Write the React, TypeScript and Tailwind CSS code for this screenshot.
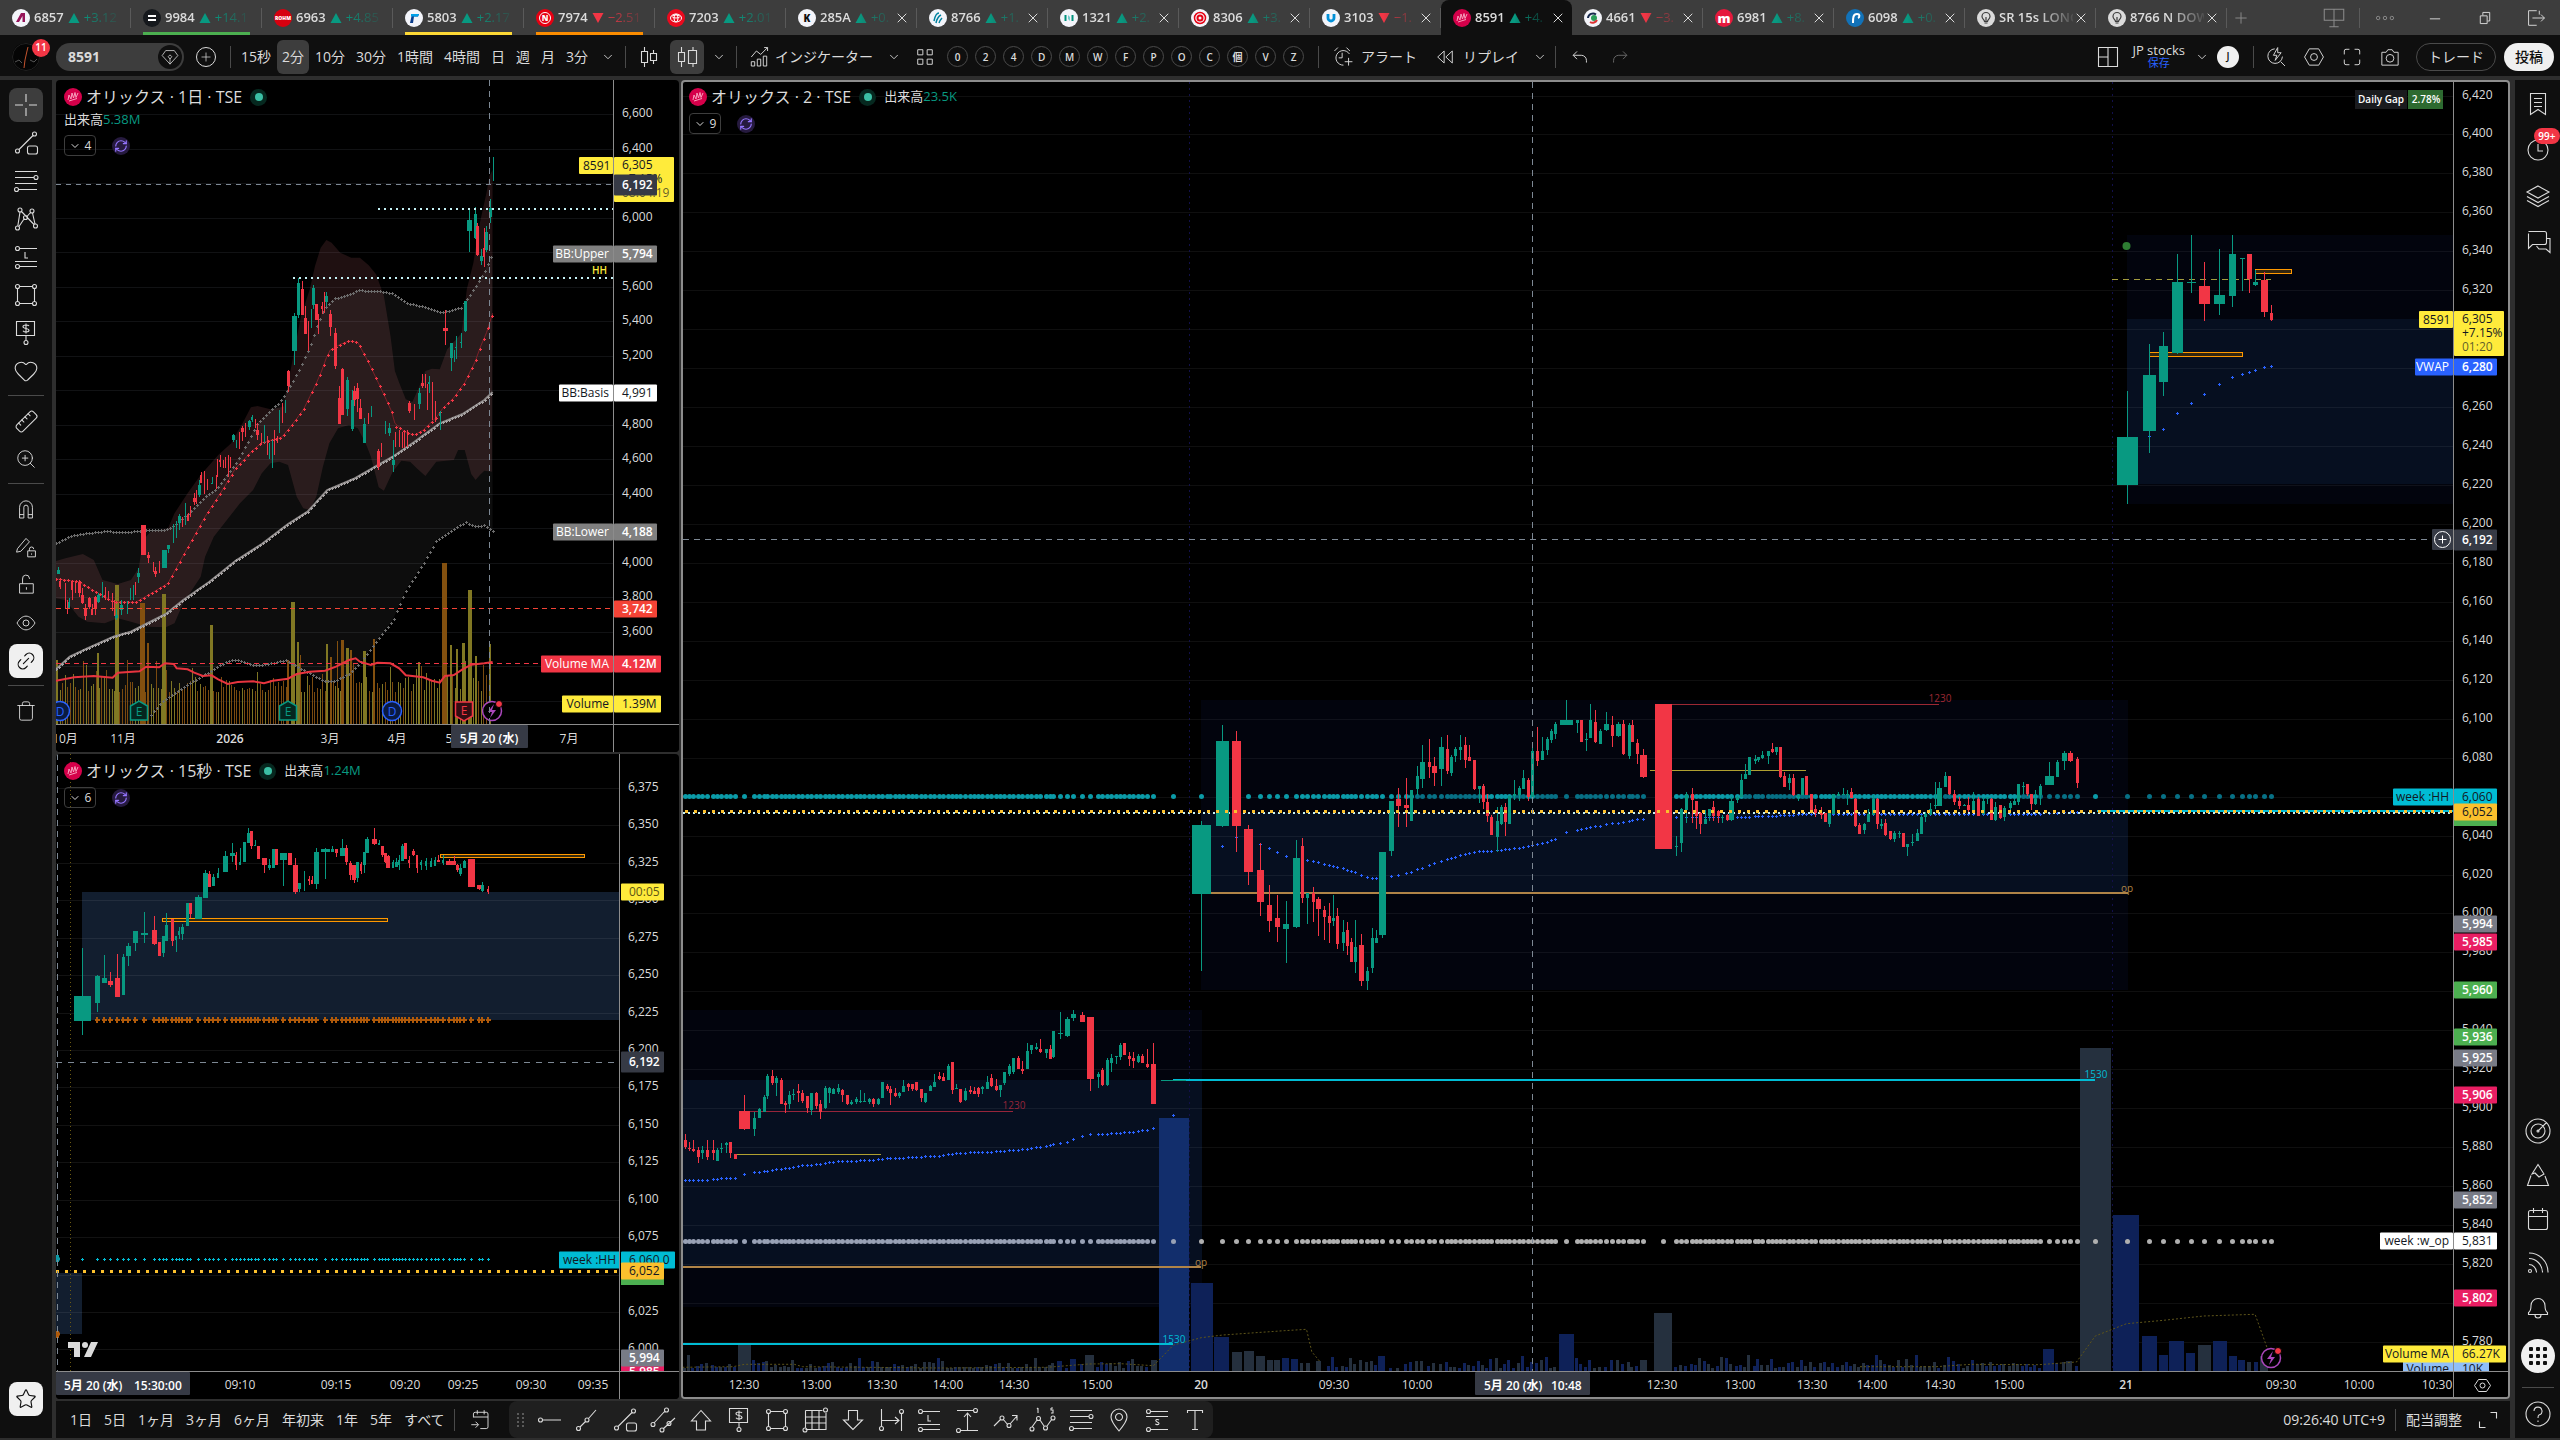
import type { ReactNode } from 'react';
import { ChevronDown, Heart, Link2, Plus, RefreshCw, Ruler, Star, Trash, X, ZoomIn } from 'lucide-react';

const UP = '#089981';
const DOWN = '#f23645';

type Point = [number, number];

/** A run of bars recorded on its own origin and scale. */
interface Segment {
  ox: number;
  oy: number;
  sx: number;
  sy: number;
  bars: string;
}

interface Candle {
  x: number;
  w: number;
  hi: number;
  top: number;
  bottom: number;
  lo: number;
  up: boolean;
}

interface Tag {
  y: number;
  text: string;
  fill: string;
  color?: string;
  h?: number;
  w?: number;
  name?: string;
  nameW?: number;
}

// Every bar: x, body width (minus = falling, 1 = default), high, body top, body bottom, low
function readCandles({ ox, oy, sx, sy, bars }: Segment): Candle[] {
  return bars
    .trim()
    .split(/\s*,\s*/)
    .map((bar) => {
      const [x, w, hi, top, bottom, lo] = bar.split(' ').map(Number);
      const width = Math.abs(w) === 1 ? 3 : Math.max(1, Math.round(Math.abs(w) / sx));
      return {
        x: Math.round(ox + x / sx),
        w: width,
        hi: Math.round(oy + hi / sy),
        top: Math.round(oy + top / sy),
        bottom: Math.round(oy + bottom / sy),
        lo: Math.round(oy + lo / sy),
        up: w > 0
      };
    });
}

function place(points: Point[], ox: number, oy: number, sx: number, sy = 3): Point[] {
  return points.map(([x, y]) => [ox + x / sx, oy + y / sy]);
}

function toPath(points: Point[]): string {
  return points.map(([x, y], i) => `${i ? 'L' : 'M'}${x.toFixed(1)} ${y.toFixed(1)}`).join('');
}

function valueAt(points: Point[], x: number): number | null {
  for (let i = 1; i < points.length; i++) {
    const [x0, y0] = points[i - 1];
    const [x1, y1] = points[i];
    if (x >= x0 - 1 && x <= x1 + 1) return y0 + ((y1 - y0) * (x - x0)) / (x1 - x0);
  }
  return null;
}

function noise(n: number): number {
  const v = Math.sin(n * 12.9898) * 43758.5453;
  return v - Math.floor(v);
}

const MAIN_19: Segment = {
  ox: 680, oy: 960, sx: 2.45, sy: 3,
  bars: `13 -1 522 540 560 568,23 -1 547 563 566 572,33 -1 540 566 572 575,45 -1 562 570 590 608,55 1 558 570 580 598,67 -1 541 570 592 600,80 -1 540 570 578 600,91 1 565 570 602 602,101 1 550 563 566 580,112 1 545 550 556 580,123 -1 546 546 580 593,134 -1 582 582 597 597,158 -26 405 453 507 509,182 1 457 475 507 528,193 1 445 447 474 474,205 1 405 411 455 455,214 1 342 348 408 418,226 -1 330 348 368 375,236 1 348 354 370 408,247 -1 354 360 432 433,258 -1 423 430 436 459,268 1 393 405 432 446,278 1 388 402 405 420,290 -1 372 393 400 426,300 -1 390 400 424 430,312 -1 408 409 444 459,322 1 400 400 450 466,332 -1 396 400 438 446,344 -1 420 432 456 477,355 1 378 384 445 447,365 1 382 384 400 428,376 1 384 387 402 402,386 1 372 384 396 402,397 -1 388 390 405 425,408 -1 405 405 432 434,420 1 420 426 432 434,430 1 411 417 427 433,440 1 390 423 427 430,452 1 398 423 427 427,462 1 413 417 427 432,474 -1 414 417 432 440,484 1 414 417 432 434,494 1 366 366 414 414,506 -1 371 377 387 394,515 -1 378 387 400 435,526 -1 384 400 408 410,537 1 395 400 408 414,547 1 360 378 396 396,558 -1 370 372 380 392,569 -1 372 372 388 392,579 -1 366 366 390 392,591 -1 388 388 414 426,600 1 400 400 426 429,613 1 376 378 392 392,623 1 342 365 381 381,634 -1 336 348 358 360,645 -1 340 350 362 362,656 1 312 318 360 360,667 -1 306 306 389 402,677 1 372 384 388 388,687 -1 386 386 425 428,699 1 385 393 420 423,710 -1 378 390 396 402,721 -1 380 393 402 402,731 -1 382 384 402 411,741 1 378 381 388 402,752 1 348 366 388 388,763 -1 343 355 378 380,775 -1 356 378 390 392,785 1 376 376 390 411,795 1 336 336 368 375,807 1 312 318 342 348,817 1 294 294 336 342,829 -1 288 294 327 328,839 -1 303 327 332 342,851 1 249 272 327 327,861 1 254 254 270 282,873 1 249 261 267 270,883 -1 237 267 276 280,896 1 267 267 278 294,906 -1 255 267 296 297,915 1 213 213 290 294,930 12 156 219 222 237,947 12 171 177 228 231,964 12 150 162 174 182,984 -12 156 165 185 186,1005 -18 171 171 357 392,1023 1 336 342 350 384,1035 -1 323 330 375 377,1045 1 294 300 375 377,1055 1 282 293 308 335,1067 1 288 288 291 312,1077 1 249 255 290 300,1089 -1 249 249 286 286,1099 -1 276 288 296 318,1109 -1 276 293 303 324,1121 1 282 288 306 308,1132 -1 282 288 308 309,1145 -1 267 312 320 324,1160 -12 249 312 432 432`
};

const MAIN_20: Segment = {
  ox: 1180, oy: 680, sx: 2.24, sy: 3,
  bars: `48 42 423 435 642 873,95 29 135 183 437 440,126 -21 153 183 437 516,153 -21 435 447 576 615,180 -16 490 570 666 708,200 -11 615 675 723 756,218 -11 645 714 741 786,238 14 663 732 747 849,259 16 480 534 741 744,274 -1 474 498 654 669,285 1 640 640 654 732,297 -1 621 639 666 726,310 -11 651 657 687 768,323 -1 678 690 711 780,333 -1 669 708 729 789,343 1 645 714 723 738,352 -1 684 708 792 807,364 1 720 756 789 813,373 -1 726 750 798 825,382 -1 774 786 846 846,393 1 720 801 846 879,406 -11 762 795 903 918,418 1 861 873 903 930,429 1 744 774 864 879,438 1 750 774 789 789,453 15 516 516 765 774,473 11 363 363 513 528,489 -11 324 357 378 441,507 -11 294 375 384 441,518 1 330 330 423 423,530 1 258 288 327 345,543 11 195 246 297 324,557 -1 177 246 261 294,570 -12 231 258 279 318,585 11 171 201 267 318,597 -1 165 207 273 282,606 1 225 231 279 288,617 1 201 207 228 246,628 1 165 201 210 240,639 -1 171 195 240 264,648 -1 195 231 243 243,659 -1 240 240 327 330,669 1 318 318 327 369,678 -1 312 318 366 387,688 -1 342 366 408 426,697 -1 405 411 465 465,709 1 381 423 471 516,718 1 375 381 432 435,727 -1 369 381 426 468,738 1 348 348 432 432,749 1 300 342 348 360,760 1 318 324 345 363,769 1 270 294 327 327,780 -1 294 300 351 363,789 1 201 213 351 351,800 -1 141 213 243 258,810 1 171 213 240 240,821 1 171 177 210 225,830 1 147 153 180 189,841 1 126 132 162 177,865 29 60 120 135 135,890 1 120 120 129 159,899 -1 120 120 186 186,910 1 159 177 180 213,919 1 72 120 174 174,930 -1 90 126 186 189,941 1 147 153 192 192,955 11 96 132 150 153,968 -1 108 135 168 201,982 11 126 132 168 171,993 -1 120 132 222 225,1005 1 129 135 228 237,1013 -1 120 135 186 186,1024 -1 177 189 222 252,1038 -16 207 225 291 294,1081 -38 72 72 507 507,1112 1 468 498 501 528,1123 1 384 387 489 516,1134 1 336 342 390 429,1146 -1 324 342 360 429,1155 -1 363 363 408 447,1164 -1 396 399 432 462,1175 1 390 417 432 432,1184 1 387 387 408 423,1195 -1 363 381 408 423,1204 -1 390 393 408 429,1213 1 405 411 414 429,1225 -1 402 405 420 423,1235 11 351 363 420 423,1247 1 348 351 360 369,1257 1 282 300 351 351,1266 1 252 282 297 297,1275 1 231 231 285 285,1287 1 225 237 243 252,1295 1 231 231 240 246,1304 1 213 225 234 237,1316 1 213 213 228 252,1325 -1 189 207 216 219,1336 1 201 201 216 225,1345 -1 201 201 291 294,1354 -1 276 288 321 321,1365 1 282 294 309 330,1374 -1 282 294 345 348,1385 1 345 345 350 363,1394 1 294 294 345 345,1403 -1 288 288 345 345,1414 -1 342 342 390 390,1423 -1 375 387 399 411,1435 -1 381 399 405 417,1444 -1 399 399 426 426,1453 1 396 399 432 441,1463 1 342 342 402 402,1473 1 336 342 348 348,1484 1 324 342 345 345,1493 1 330 342 345 375,1502 -1 324 336 354 354,1513 -1 354 357 438 441,1522 -1 429 435 462 462`
};

const MAIN_20_LATE: Segment = {
  ox: 1860, oy: 680, sx: 2.24, sy: 3,
  bars: `8 1 430 432 450 462,19 1 387 402 426 426,29 1 345 357 405 405,39 -1 354 357 432 447,48 1 417 432 438 447,57 -1 417 429 465 468,68 -1 453 453 477 480,77 1 453 459 477 486,88 1 453 459 462 474,97 -1 459 459 501 501,106 1 492 492 501 528,117 1 462 486 489 498,127 1 447 459 483 483,137 1 405 411 462 462,146 1 396 402 411 426,156 1 369 387 405 405,167 1 306 375 378 387,178 11 306 324 378 378,191 1 276 288 321 321,200 -1 288 288 342 345,210 -1 330 342 366 375,221 -1 351 363 378 387,233 1 372 375 378 378,243 -1 351 375 390 396,254 1 336 363 393 399,265 -1 351 357 408 408,275 1 351 363 402 405,285 1 351 351 355 372,294 -1 354 357 420 420,303 1 366 381 420 423,314 -1 375 375 414 417,323 1 378 384 411 423,335 1 363 369 384 402,344 1 357 363 375 375,355 1 312 312 366 375,364 1 306 318 321 342,373 -1 312 312 342 348,384 -1 342 342 372 390,393 1 330 357 372 375,404 1 312 318 345 375,424 21 246 288 315 315,442 1 240 246 291 291,456 11 213 219 243 270,471 -11 213 219 243 246,485 -1 231 237 309 324`
};

const MAIN_21: Segment = {
  ox: 2060, oy: 200, sx: 3, sy: 3,
  bars: `202 63 573 711 855 912,268 39 432 525 693 759,310 27 396 438 546 588,352 33 162 246 459 462,394 27 105 246 249 279,433 -33 186 258 312 363,478 33 147 285 312 345,517 21 105 162 288 321,547 15 174 174 177 273,568 -15 162 162 237 279,586 15 210 246 255 258,613 -21 216 240 336 351,634 -9 315 339 360 363`
};

const DAILY_HIGH: Segment = {
  ox: 0, oy: 76, sx: 2.292, sy: 3,
  bars: `661 -7 882 884 930 948,673 12 711 720 825 867,684 7 606 621 717 726,693 -8 615 639 717 717,700 -8 690 726 774 774,707 -2 735 774 800 825,712 2 699 720 740 756,718 7 627 636 687 699,725 -7 684 684 732 732,730 -2 715 716 740 774,737 -5 678 690 699 714,742 -2 648 680 690 711,748 7 648 660 678 690,757 -7 702 714 753 780,767 -7 756 770 870 879,776 -7 930 966 1044 1044,785 -7 877 879 1016 1016,796 7 903 912 998 1020,806 7 942 972 1060 1065,812 -7 930 945 972 990,819 -7 921 936 970 1008,826 -7 970 996 1028 1028,851 2 990 1000 1020 1024,938 -8 975 981 1004 1012,950 -2 985 990 1020 1032,961 7 936 951 984 999,968 -7 894 921 930 936,973 -2 894 900 930 936,978 -2 925 930 960 1002,984 5 900 918 925 952,990 -2 918 930 1000 1032,997 -2 975 990 1020 1037,1008 5 1005 1010 1020 1062,1019 -12 702 756 765 807,1033 7 801 801 846 885,1040 2 822 830 850 858,1046 5 780 813 817 850,1056 4 771 798 801 816,1065 7 675 675 765 768,1076 12 396 432 465 528,1088 8 393 414 486 489,1094 -8 441 450 537 540,1102 7 519 540 555 567,1109 -5 456 516 543 573,1115 7 450 468 522 528,1122 7 369 396 423 440,1129 2 243 250 300 315`
};

const DAILY_LOW: Segment = {
  ox: 0, oy: 400, sx: 2.292, sy: 3,
  bars: `132 6 501 510 522 522,138 -5 536 542 560 568,148 -2 550 570 610 628,153 -2 600 610 630 642,158 5 595 605 628 628,165 -5 541 545 570 600,173 -2 545 550 570 580,180 -7 540 545 580 590,187 -7 565 585 608 612,194 -7 612 628 648 660,205 -7 592 595 620 628,212 -5 612 628 645 645,218 -7 588 591 625 645,225 7 580 585 605 610,233 2 546 555 585 595,240 -5 560 585 590 600,248 -2 572 580 590 600,256 -2 580 600 620 632,262 -2 600 610 630 648,267 7 628 645 655 660,278 7 600 615 630 645,290 2 603 610 630 642,297 2 565 575 590 600,304 2 556 560 590 600,310 -2 545 550 570 585,317 7 504 520 532 548,328 -12 375 375 465 465,340 -7 455 465 475 490,350 -2 485 490 510 516,356 -7 500 514 522 530,365 -2 484 490 510 518,375 12 450 450 504 504,386 7 434 434 447 460,397 2 372 378 410 428,403 2 362 378 400 413,411 7 342 348 368 390,418 -2 352 360 370 380,423 2 308 320 360 375,430 -5 340 345 362 362,436 -2 318 320 340 350,444 -7 280 295 305 315,450 -2 270 280 300 312,456 7 240 255 285 292,460 -5 216 225 250 250,467 -2 213 220 260 282,475 -2 237 240 260 270,485 5 232 248 251 252,494 -2 225 230 250 268,498 -2 177 180 220 232,504 -5 165 180 185 200,510 -2 180 185 200 205,516 -2 172 175 200 205,523 -2 165 170 210 230,528 -2 172 175 200 205,535 7 102 104 120 125,540 2 120 125 140 145,547 -2 97 100 140 148,555 -7 78 84 95 123,562 -2 70 80 100 110,570 7 60 64 80 90,577 5 45 50 60 65,585 -2 57 60 80 84,590 -7 70 90 105 120,598 -2 100 105 130 133,604 2 75 80 120 130,612 -2 108 120 150 165,617 2 130 140 170 178,623 2 120 140 190 203,629 -2 90 100 150 165,634 -2 108 110 120 130,640 2 30 40 90 100,646 -2 10 20 50 68,653 2 0 10 30 40,835 7 55 72 128 130,843 -2 40 45 60 72,851 2 20 25 45 52,867 -7 147 153 202 210,874 -2 130 135 160 170,882 2 63 70 90 102,892 7 70 84 100 108,901 8 120 180 195 215,906 -2 96 100 130 142,915 -2 90 100 130 140,921 -2 95 100 130 145,927 -2 100 110 130 145,933 -2 90 95 130 140`
};

const SECONDS: Segment = {
  ox: 0, oy: 740, sx: 2.292, sy: 3,
  bars: `189 39 624 768 843 885,223 11 705 709 789 816,239 11 645 714 729 729,253 -11 696 723 735 741,269 -11 642 714 771 771,283 7 642 651 765 765,294 11 609 618 648 678,310 11 573 573 609 633,329 15 516 579 585 609,352 -12 528 570 612 615,365 -7 606 606 648 648,373 7 588 588 640 651,380 7 519 555 603 603,395 -7 537 537 603 618,404 5 588 588 600 636,411 5 561 573 585 597,418 7 552 561 582 600,428 7 489 489 558 558,436 -7 489 489 521 534,453 15 465 471 537 537,471 12 390 399 474 474,480 -7 393 402 441 441,489 7 402 411 438 438,500 5 384 399 414 414,515 11 333 348 396 396,531 11 309 339 348 366,542 -5 336 345 375 390,551 5 324 366 375 375,559 7 306 306 366 366,568 7 264 279 309 309,576 -7 273 273 318 327,584 5 300 315 318 318,592 -7 318 318 357 357,606 -11 354 354 375 400,617 7 357 375 384 390,625 8 327 327 384 384,632 -7 327 327 375 375,648 16 339 339 360 438,664 -9 339 339 375 375,675 -11 354 375 456 462,686 7 430 430 447 456,696 3 393 429 432 453,708 -5 408 417 423 435,716 -5 408 420 432 432,725 11 324 336 432 447,745 20 324 327 336 417,761 7 318 327 335 335,771 -7 327 327 339 351,783 11 297 324 348 348,794 -7 315 324 366 375,802 -7 363 369 405 420,812 -9 375 375 420 429,819 7 366 366 414 426,827 -5 366 372 393 402,834 7 336 336 375 400,842 10 291 297 339 339,858 -11 264 297 312 315,868 5 300 309 314 314,876 -7 318 318 344 350,882 -7 339 339 365 368,890 -9 345 348 384 384,900 5 360 366 384 384,908 7 354 366 381 381,914 5 345 360 375 390,922 7 312 318 363 363,929 -7 309 309 357 357,938 -5 348 360 369 384,947 -7 327 333 345 348,955 -5 345 345 385 399,965 5 360 366 375 390,976 5 354 363 378 390,988 5 354 363 380 380,997 5 350 360 378 378,1005 -7 345 360 366 366,1015 5 345 360 369 375,1028 -16 357 363 375 375,1040 -7 348 363 375 375,1048 -7 372 375 390 396,1055 7 372 384 402 408,1064 7 360 363 384 384,1079 -15 357 357 441 441,1097 -10 435 435 446 450,1105 7 426 436 452 455,1118 -5 438 447 455 462`
};

const CLOUD_TOP: Point[] = [[128, 483], [150, 475], [190, 462], [215, 480], [235, 540], [270, 552], [300, 540], [318, 505], [328, 420], [345, 395], [385, 385], [400, 340], [430, 280], [460, 225], [500, 165], [530, 130], [560, 60], [575, 22], [590, 18], [620, 28], [650, 20], [668, -102], [690, -252], [710, -332], [722, -402], [735, -457], [748, -480], [760, -472], [780, -442], [805, -427], [825, -427], [845, -404], [862, -377], [880, -312], [895, -192], [905, -87], [915, -52], [930, -2], [945, 6], [960, -37], [975, -87], [990, -94], [1008, -92], [1025, -152], [1058, -200], [1070, -332], [1085, -412], [1100, -532], [1115, -622], [1122, -672], [1129, -690]];
const CLOUD_BOTTOM: Point[] = [[1128, 215], [1110, 212], [1100, 225], [1090, 240], [1080, 222], [1065, 150], [1050, 150], [1040, 180], [1000, 185], [975, 228], [955, 205], [940, 185], [920, 182], [900, 215], [880, 272], [868, 262], [850, 170], [838, 130], [820, 85], [800, 75], [775, 85], [755, 130], [740, 200], [725, 290], [710, 330], [695, 325], [680, 290], [660, 195], [640, 185], [620, 190], [600, 220], [580, 270], [550, 310], [520, 360], [490, 410], [470, 470], [460, 530], [440, 570], [420, 610], [400, 670], [380, 682], [340, 680], [300, 665], [270, 655], [240, 670], [200, 665], [180, 650], [150, 600], [128, 595]];
const BB_UPPER: Point[] = [[128, 430], [155, 412], [180, 402], [240, 394], [290, 396], [330, 391], [385, 388], [410, 365], [440, 330], [470, 290], [495, 268], [540, 190], [560, 145], [590, 70], [620, 30], [640, 8], [655, -22], [684, -87], [700, -132], [712, -167], [725, -217], [737, -257], [748, -282], [765, -304], [800, -317], [820, -329], [870, -327], [900, -320], [930, -292], [970, -280], [1010, -262], [1030, -268], [1055, -277], [1075, -312], [1100, -362], [1115, -397], [1129, -440]];
const BB_BASIS: Point[] = [[128, 808], [160, 770], [200, 745], [260, 710], [300, 695], [330, 675], [380, 642], [420, 600], [480, 545], [540, 482], [600, 432], [660, 372], [705, 335], [750, 270], [810, 237], [860, 200], [900, 170], [950, 125], [1008, 70], [1060, 42], [1110, 0], [1129, -24]];
const BB_LOWER: Point[] = [[345, 945], [370, 905], [400, 880], [440, 845], [480, 815], [520, 783], [540, 778], [585, 796], [620, 790], [655, 780], [680, 800], [710, 820], [740, 842], [765, 844], [800, 820], [830, 780], [870, 710], [900, 660], [930, 570], [970, 490], [1000, 420], [1030, 395], [1065, 367], [1090, 378], [1110, 376], [1129, 393]];
const FAST_MA: Point[] = [[128, 536], [180, 545], [215, 572], [260, 605], [310, 607], [340, 585], [385, 550], [410, 490], [440, 420], [470, 350], [510, 270], [540, 205], [580, 150], [600, 128], [645, 112], [665, 82], [695, 30], [710, -10], [725, -50], [737, -87], [748, -127], [757, -150], [780, -167], [800, -177], [820, -173], [845, -112], [867, -52], [885, -2], [897, 33], [905, 70], [930, 98], [950, 105], [970, 90], [1000, 52], [1015, 25], [1040, -7], [1065, -52], [1088, -112], [1102, -162], [1115, -202], [1129, -260]];
const VOLUME_MA: Point[] = [[128, 842], [170, 832], [215, 828], [258, 833], [270, 818], [320, 814], [335, 800], [365, 802], [378, 790], [398, 792], [405, 805], [430, 808], [445, 818], [465, 828], [485, 826], [500, 838], [522, 852], [545, 846], [580, 844], [605, 850], [625, 842], [660, 836], [680, 822], [710, 815], [745, 812], [770, 800], [800, 780], [815, 775], [825, 785], [850, 795], [865, 788], [895, 790], [915, 805], [930, 826], [970, 832], [990, 842], [1008, 848], [1020, 828], [1040, 825], [1060, 808], [1080, 794], [1110, 790], [1129, 786]];
// x, width, top, 1 = olive / 0 = brown
const DAILY_VOLUME: [number, number, number, number][] = [
  [131, 4, 780, 1], [192, 3, 783, 0], [225, 5, 760, 1], [268, 9, 555, 1], [326, 11, 610, 0], [340, 5, 730, 0], [376, 10, 582, 1], [485, 7, 675, 1], [661, 5, 780, 0], [671, 9, 605, 1], [683, 5, 727, 1], [690, 3, 765, 0], [749, 5, 732, 1], [758, 4, 770, 0], [773, 3, 722, 0], [785, 7, 720, 0], [795, 6, 745, 1], [804, 4, 750, 0], [834, 6, 752, 1], [857, 5, 716, 0], [960, 5, 787, 1], [1018, 12, 489, 0], [1033, 5, 735, 1], [1047, 5, 748, 1], [1062, 7, 730, 1], [1077, 9, 570, 1], [1090, 4, 767, 1], [1124, 5, 733, 1]
];

const VWAP: Point[] = [
  ...place([[13, 661], [55, 661], [80, 657], [134, 653], [158, 640], [205, 633], [250, 626], [300, 616], [344, 612], [376, 605], [430, 602], [484, 598], [506, 595], [560, 592], [640, 587], [677, 579], [760, 575], [839, 568], [896, 558], [947, 545], [984, 529], [1005, 523], [1060, 520], [1121, 514], [1160, 505], [1209, 466]], 680, 960, 2.45),
  ...place([[95, 490], [126, 472], [153, 480], [180, 493], [200, 505], [218, 517], [238, 529], [259, 533], [285, 541], [310, 547], [333, 556], [364, 565], [393, 577], [406, 586], [429, 595], [438, 595], [473, 589], [507, 580], [530, 568], [570, 550], [597, 538], [628, 526], [669, 514], [709, 511], [749, 505], [789, 496], [821, 485], [841, 478], [865, 455], [890, 451], [919, 442], [955, 433], [993, 425], [1024, 418], [1054, 415], [1112, 412], [1240, 412], [1300, 408], [1354, 406], [1385, 403], [1520, 403]], 1180, 680, 2.24),
  ...place([[0, 403], [200, 403], [400, 401], [485, 395]], 1860, 680, 2.24),
  ...place([[268, 703], [310, 688], [352, 637], [394, 607], [433, 580], [478, 550], [517, 532], [547, 523], [568, 517], [586, 511], [613, 502], [634, 499]], 2060, 200, 3)
];

const MAIN_VOLUME_MA: Point[] = [
  ...place([[6, 1222], [130, 1220], [158, 1213], [280, 1213], [300, 1220], [640, 1224], [900, 1222], [1000, 1212], [1080, 1211], [1160, 1217], [1209, 1155], [1277, 1133], [1330, 1125], [1480, 1112], [1535, 1108], [1548, 1175], [1568, 1205]], 680, 960, 2.45),
  ...place([[0, 860], [170, 860], [250, 853], [400, 854], [485, 846], [527, 768], [597, 731], [680, 721], [770, 708], [885, 703], [915, 815]], 1860, 1080, 2.24)
];

// left edge, width, top, 1 = blue / 0 = slate
const MAIN_VOLUME: [number, number, number, number][] = [
  [738, 13, 1345, 0], [1085, 9, 1355, 0], [1057, 5, 1361, 1], [1070, 6, 1359, 1], [1151, 6, 1360, 0], [1159, 30, 1118, 1], [1191, 22, 1283, 1], [1214, 15, 1337, 1], [1232, 10, 1352, 0], [1244, 10, 1351, 0], [1256, 9, 1356, 0], [1267, 6, 1360, 0], [1274, 6, 1360, 0], [1282, 7, 1358, 1], [1291, 7, 1359, 1], [1300, 3, 1363, 0], [1306, 4, 1363, 0], [1316, 5, 1361, 0], [1378, 7, 1356, 1], [1559, 15, 1334, 1], [1640, 7, 1360, 0], [1654, 18, 1313, 0], [2043, 11, 1349, 1], [2066, 6, 1361, 0], [2080, 31, 1048, 0], [2113, 26, 1215, 1], [2142, 15, 1336, 1], [2159, 9, 1355, 1], [2169, 15, 1341, 1], [2186, 9, 1353, 1], [2198, 13, 1345, 0], [2213, 14, 1341, 1], [2229, 8, 1356, 1], [2238, 7, 1360, 1], [2247, 4, 1362, 0], [2254, 4, 1362, 1], [2260, 8, 1356, 0]
];

function Candles({ data }: { data: Candle[] }) {
  return (
    <g shapeRendering="crispEdges">
      {data.map((c, i) => (
        <g key={i} fill={c.up ? UP : DOWN}>
          <rect x={c.x} y={c.hi} width={1} height={Math.max(1, c.lo - c.hi)} />
          <rect x={c.x - Math.floor(c.w / 2)} y={c.top} width={c.w} height={Math.max(1, c.bottom - c.top)} />
        </g>
      ))}
    </g>
  );
}

function Crosses({ points, color }: { points: Point[]; color: string }) {
  const d = points.map(([x, y]) => `M${Math.round(x) - 1} ${Math.round(y) + 0.5}h3M${Math.round(x) + 0.5} ${Math.round(y) - 1}v3`).join('');
  return <path d={d} stroke={color} fill="none" shapeRendering="crispEdges" />;
}

function HLine({ y, x1, x2, color, dash, w = 1 }: { y: number; x1: number; x2: number; color: string; dash?: string; w?: number }) {
  return <path d={`M${x1} ${w % 2 ? y + 0.5 : y}H${x2}`} stroke={color} strokeWidth={w} strokeDasharray={dash} shapeRendering="crispEdges" />;
}

function VLine({ x, y1, y2, color, dash }: { x: number; y1: number; y2: number; color: string; dash?: string }) {
  return <path d={`M${x + 0.5} ${y1}V${y2}`} stroke={color} strokeDasharray={dash} shapeRendering="crispEdges" />;
}

function PriceTags({ axis, tags }: { axis: number; tags: Tag[] }) {
  return (
    <>
      {tags.map((t) => {
        const h = t.h ?? 17;
        const color = t.color ?? '#ffffff';
        return (
          <g key={t.text + t.y} fontSize={12} fill={color}>
            <rect x={axis + 1} y={t.y - h / 2} width={t.w ?? 43} height={h} rx={1} fill={t.fill} />
            <text x={axis + 9} y={t.y + 4} fontWeight={color === '#ffffff' ? 600 : 400}>{t.text}</text>
            {t.name && (
              <>
                <rect x={axis - t.nameW!} y={t.y - h / 2} width={t.nameW} height={h} rx={1} fill={t.fill} />
                <text x={axis - 4} y={t.y + 4} textAnchor="end">{t.name}</text>
              </>
            )}
          </g>
        );
      })}
    </>
  );
}

interface AxisLabelsProps {
  x: number;
  from: number;
  step: number;
  count: number;
  top: number;
  pitch: number;
  skip?: number[];
}

function AxisLabels({ x, from, step, count, top, pitch, skip = [] }: AxisLabelsProps) {
  return (
    <g fill="#dbdbdb" fontSize={12}>
      {Array.from({ length: count }, (_, i) => from - i * step).map((price, i) =>
        skip.includes(price) ? null : (
          <text key={price} x={x} y={Math.round(top + i * pitch) + 3}>{price.toLocaleString('en-US')}</text>
        )
      )}
    </g>
  );
}

function TimeLabels({ y, labels }: { y: number; labels: [number, string][] }) {
  return (
    <g fill="#dbdbdb" fontSize={12} textAnchor="middle">
      {labels.map(([x, text]) => (
        <text key={x} x={x} y={y} fontWeight={/^(20|21|2026)$/.test(text) ? 600 : 400}>{text}</text>
      ))}
    </g>
  );
}

function Bolt({ x, y }: { x: number; y: number }) {
  return (
    <g>
      <circle cx={x} cy={y} r={9.5} fill="#000" stroke="#ab47bc" strokeWidth={1.5} />
      <path d={`M${x + 2} ${y - 7}l-6 8h4l-2 6 6-8h-4z`} fill="#ab47bc" />
      <circle cx={x + 7} cy={y - 7} r={3.5} fill={DOWN} stroke="#000" />
    </g>
  );
}

function EventMark({ x, kind }: { x: number; kind: 'D' | 'up' | 'down' }) {
  const color = kind === 'D' ? '#2962ff' : kind === 'up' ? '#089981' : '#f23645';
  const inside = kind === 'D' ? '#0a1a40' : kind === 'up' ? '#04261f' : '#330d12';
  return (
    <g fill={inside} stroke={color} strokeWidth={1.5}>
      {kind === 'D' && <circle cx={x} cy={711} r={9.5} />}
      {kind === 'up' && <path d={`M${x - 8.5} 706l8.500-5 8.500 5v14h-17z`} />}
      {kind === 'down' && <path d={`M${x - 8.5} 702h17v14l-8.500 5-8.500-5z`} />}
      <text x={x} y={kind === 'down' ? 715 : 716} textAnchor="middle" fontSize={12} fill={color} stroke="none">{kind === 'D' ? 'D' : 'E'}</text>
    </g>
  );
}

const GRID = '#111214';
const CROSSHAIR = '#7d8894';
const dailyCandles = [...readCandles(DAILY_HIGH), ...readCandles(DAILY_LOW)];
const secondCandles = readCandles(SECONDS);
const mainCandles = [MAIN_19, MAIN_20, MAIN_20_LATE, MAIN_21].flatMap(readCandles);

function sample(points: Point[], step: number): Point[] {
  const out: Point[] = [];
  for (let x = points[0][0]; x <= points[points.length - 1][0]; x += step) {
    const y = valueAt(points, x);
    if (y !== null) out.push([x, y]);
  }
  return out;
}

function DailyChart() {
  const at = (points: Point[]) => place(points, 0, 400, 2.292);
  return (
    <svg className="block h-full w-full" role="img" aria-label="8591 1日">
      <g transform="translate(-56 -80)">
        {Array.from({ length: 18 }, (_, i) => (
          <HLine key={i} y={Math.round(114 + i * 34.53)} x1={56} x2={613} color={GRID} />
        ))}
        <path d={`${toPath(at([...CLOUD_TOP, ...CLOUD_BOTTOM]))}Z`} fill="#ff828c" fillOpacity={0.12} />
        <path d={`${toPath(at([...BB_UPPER, ...[...BB_LOWER].reverse(), [345, 972], [128, 972]] as Point[]))}Z`} fill="#fff" fillOpacity={0.05} />
        <g shapeRendering="crispEdges">
          {Array.from({ length: 166 }, (_, i) => (
            <rect key={i} x={57 + Math.round(i * 2.6)} y={724 - Math.round(32 + noise(i + 3) * noise(i + 90) * 36)} width={1} height={70} fill={noise(i) > 0.5 ? '#7d7524' : '#7a4a10'} />
          ))}
          {DAILY_VOLUME.map(([x, w, top, olive]) => (
            <rect key={x} x={Math.round((x - w / 2) / 2.292)} y={400 + Math.round(top / 3)} width={Math.max(1, Math.round(w / 2.292))} height={324 - Math.round(top / 3)} fill={olive ? '#817823' : '#83500f'} />
          ))}
        </g>
        <rect x={56} y={724} width={623} height={40} fill="#000" />
        <Crosses points={sample(at(BB_UPPER), 3)} color="#6c6c6c" />
        <Crosses points={sample(at(BB_LOWER), 3)} color="#6c6c6c" />
        <path d={toPath(at(BB_BASIS))} stroke="#8a8686" strokeWidth={2} fill="none" />
        <Crosses points={sample(at(BB_BASIS), 3)} color="#a8a4a4" />
        <path d={toPath(at(FAST_MA))} stroke="#7d2129" fill="none" />
        <Crosses points={sample(at(FAST_MA), 4)} color={DOWN} />
        <Candles data={dailyCandles} />
        <HLine y={608} x1={56} x2={613} color="#f44336" dash="5 4" />
        <HLine y={663} x1={56} x2={546} color="#f23645" dash="5 4" />
        <path d={toPath(at(VOLUME_MA))} stroke="#e8343f" strokeWidth={2} fill="none" />
        <HLine y={209} x1={378} x2={613} color="#c4f1f5" dash="2 4" w={2} />
        <HLine y={278} x1={293} x2={613} color="#c4f1f5" dash="2 4" w={2} />
        <EventMark x={60} kind="D" />
        <EventMark x={139} kind="up" />
        <EventMark x={288} kind="up" />
        <EventMark x={392} kind="D" />
        <EventMark x={464} kind="down" />
        <Bolt x={492} y={711} />
        <HLine y={184} x1={56} x2={613} color={CROSSHAIR} dash="5 5" />
        <VLine x={489} y1={80} y2={724} color={CROSSHAIR} dash="6 5" />
        <text x={607} y={274} textAnchor="end" fontSize={10} fontWeight={600} fill="#ffeb3b">HH</text>
        <AxisLabels x={622} from={6600} step={200} count={16} top={114} pitch={34.53} skip={[6200, 5800, 5000, 4200]} />
        <PriceTags
          axis={613}
          tags={[
            { y: 254, text: '5,794', fill: '#808080', name: 'BB:Upper', nameW: 60 },
            { y: 393, text: '4,991', fill: '#ffffff', color: '#131722', name: 'BB:Basis', nameW: 54 },
            { y: 532, text: '4,188', fill: '#808080', name: 'BB:Lower', nameW: 60 },
            { y: 609, text: '3,742', fill: '#f44336' },
            { y: 664, text: '4.12M', fill: '#f23645', w: 47, name: 'Volume MA', nameW: 72 },
            { y: 704, text: '1.39M', fill: '#ffeb3b', color: '#131722', w: 47, name: 'Volume', nameW: 51 }
          ]}
        />
        <rect x={614} y={157} width={60} height={45} rx={1} fill="#ffeb3b" />
        <g fontSize={12} fill="#131722">
          <rect x={579} y={157} width={34} height={17} rx={1} fill="#ffeb3b" />
          <text x={583} y={170}>8591</text>
          <text x={622} y={169}>6,305</text>
          <text x={622} y={183}>+7.15%</text>
          <text x={622} y={197} fillOpacity={0.7}>08:04:19</text>
        </g>
        <PriceTags axis={613} tags={[{ y: 185, text: '6,192', fill: '#363a45', h: 21 }]} />
        <VLine x={613} y1={80} y2={752} color="#8c8c8c" />
        <HLine y={724} x1={56} x2={679} color="#8c8c8c" />
        <TimeLabels y={743} labels={[[65, '10月'], [123, '11月'], [230, '2026'], [330, '3月'], [397, '4月'], [455, '5月'], [569, '7月']]} />
        <rect x={451} y={725} width={77} height={23} rx={1} fill="#363a45" />
        <text x={489} y={743} fontSize={12} fontWeight={600} fill="#fff" textAnchor="middle">5月 20 (水)</text>
      </g>
    </svg>
  );
}

function SecondsChart() {
  return (
    <svg className="block h-full w-full" role="img" aria-label="8591 15秒">
      <g transform="translate(-56 -754)">
        <rect x={82} y={892} width={538} height={128} fill="#121e2f" />
        <rect x={56} y={1273} width={26} height={61} fill="#121e2f" />
        {Array.from({ length: 16 }, (_, i) => (
          <HLine key={i} y={Math.round(788 + i * 37.43)} x1={56} x2={620} color="#ffffff12" />
        ))}
        <VLine x={70} y1={754} y2={1371} color="#6b5a12" dash="1 3" />
        <g fill="#33290f" stroke="#ff9800">
          <rect x={162.5} y={918.5} width={225} height={3} />
          <rect x={440.5} y={854.5} width={144} height={3} />
        </g>
        <path d={secondCandles.slice(1).map((c) => `M${c.x - 2} 1020h5M${c.x} 1017v6`).join('')} stroke="#b05a0a" strokeWidth={2} shapeRendering="crispEdges" />
        <Candles data={secondCandles} />
        <Crosses points={secondCandles.map((c) => [c.x, 1259])} color="#00bcd4" />
        <path d="M57.500 1255v7M56 1259h4" stroke="#0e99a5" strokeWidth={3} />
        <path d="M57.500 1331v7M56 1334h4" stroke="#b05a0a" strokeWidth={3} />
        <HLine y={1271} x1={56} x2={620} color="#fbc02d" dash="3 6" w={3} />
        <HLine y={1062} x1={56} x2={620} color={CROSSHAIR} dash="6 6" />
        <VLine x={57} y1={754} y2={1371} color={CROSSHAIR} dash="6 5" />
        {/* TradingView mark */}
        <g fill="#dbdbdb">
          <path d="M68 1342h12v15h-6v-9h-6zM91 1342h7l-7 15h-7z" />
          <circle cx={85} cy={1345} r={3} />
        </g>
        <AxisLabels x={628} from={6375} step={25} count={16} top={788} pitch={37.43} skip={[6050]} />
        <rect x={621} y={1279} width={43} height={6} fill="#4caf50" />
        <PriceTags
          axis={620}
          tags={[
            { y: 892, text: '00:05', fill: '#ffeb3b', color: '#5c5516' },
            { y: 1062, text: '6,192', fill: '#363a45', h: 21 },
            { y: 1260, text: '6,060.0', fill: '#00bcd4', color: '#131722', w: 54, name: 'week :HH', nameW: 61 },
            { y: 1271, text: '6,052', fill: '#fbc02d', color: '#131722' },
            { y: 1372, text: '5,985', fill: '#e91e63' },
            { y: 1358, text: '5,994', fill: '#787b86' }
          ]}
        />
        <rect x={56} y={1371} width={623} height={30} fill="#000" />
        <VLine x={619} y1={754} y2={1399} color="#8c8c8c" />
        <HLine y={1371} x1={56} x2={679} color="#8c8c8c" />
        <TimeLabels y={1389} labels={[[240, '09:10'], [336, '09:15'], [405, '09:20'], [463, '09:25'], [531, '09:30'], [593, '09:35']]} />
        <rect x={56} y={1372} width={134} height={23} rx={1} fill="#363a45" />
        <g fontSize={12} fontWeight={600} fill="#fff">
          <text x={64} y={1390}>5月 20 (水)</text>
          <text x={134} y={1390}>15:30:00</text>
        </g>
      </g>
    </svg>
  );
}

function MainChart() {
  const dots = [...mainCandles.map((c) => ({ x: c.x, above: c.bottom < 797 })), { x: 1173, above: false }, { x: 2095, above: false }];
  const vwap = mainCandles.map((c): Point => [c.x, valueAt(VWAP, c.x) ?? -50]).filter(([x]) => (x < 1190 || x > 1210) && (x < 2125 || x > 2135));
  return (
    <svg className="block h-full w-full" role="img" aria-label="8591 2分">
      <g transform="translate(-683 -82)">
        <g fill="#02040d">
          <rect x={683} y={1010} width={519} height={297} />
          <rect x={1201} y={700} width={927} height={290} />
          <rect x={2127} y={235} width={326} height={269} />
        </g>
        <g fill="#060f20">
          <rect x={683} y={1080} width={519} height={187} />
          <rect x={1201} y={813} width={927} height={80} />
          <rect x={2127} y={319} width={326} height={165} />
        </g>
        {Array.from({ length: 33 }, (_, i) => (
          <HLine key={i} y={Math.round(95.5 + i * 38.95)} x1={683} x2={2453} color="#ffffff0f" />
        ))}
        <VLine x={1189} y1={82} y2={1371} color="#12104a" dash="2 4" />
        <VLine x={2112} y1={82} y2={1371} color="#12104a" dash="2 4" />
        <g shapeRendering="crispEdges">
          {mainCandles.filter((c) => c.x < 1155 || (c.x > 1325 && c.x < 2080)).map((c, i) => {
            const h = Math.round(3 + noise(i) * noise(i + 40) * 15);
            return <rect key={i} x={c.x - 2} y={1371 - h} width={3} height={h} fill={noise(i + 7) > 0.5 ? '#10225a' : '#25303e'} />;
          })}
          {MAIN_VOLUME.map(([x, w, top, blue]) => (
            <rect key={x} x={x} y={top} width={w} height={1371 - top} fill={blue ? (top === 1118 ? '#122e6c' : '#0e2158') : '#25303e'} />
          ))}
        </g>
        <g stroke="#5e551a" strokeDasharray="2 2" fill="none">
          <path d={toPath(MAIN_VOLUME_MA.slice(0, 17))} />
          <path d={toPath(MAIN_VOLUME_MA.slice(17))} />
        </g>
        <Crosses points={[...vwap, [1173, 1115]]} color="#2962ff" />
        {dots.map((d, i) => (
          <g key={i}>
            <circle cx={d.x + 0.5} cy={796.5} r={2.5} fill={d.above ? '#077085' : '#0b9ba8'} />
            <circle cx={d.x + 0.5} cy={1241.5} r={2.5} fill={d.x < 1190 ? '#98a1b5' : '#b0b0b0'} />
          </g>
        ))}
        <HLine y={893} x1={1201} x2={2128} color="#b08447" w={2} />
        <HLine y={1267} x1={683} x2={1201} color="#b08447" w={2} />
        <HLine y={1080} x1={1173} x2={2095} color="#00bcd4" w={2} />
        <HLine y={1080} x1={1161} x2={1186} color={UP} />
        <HLine y={1344} x1={683} x2={1173} color="#00bcd4" w={2} />
        <HLine y={811} x1={2097} x2={2453} color="#00bcd4" w={2} />
        <HLine y={1111} x1={742} x2={1013} color="#96253a" />
        <HLine y={704} x1={1662} x2={1939} color="#9c2833" />
        <HLine y={1154} x1={735} x2={881} color="#b0a030" />
        <HLine y={770} x1={1650} x2={1806} color="#b0a030" />
        <HLine y={813} x1={683} x2={2453} color="#c4f1f5" dash="2 3" w={2} />
        <HLine y={279} x1={2112} x2={2271} color="#a39c3e" dash="6 5" />
        <g fill="#33260f" stroke="#ff9800">
          <rect x={2149.5} y={352.5} width={93} height={4} />
          <rect x={2255.5} y={269.5} width={36} height={4} />
        </g>
        <Candles data={mainCandles} />
        <HLine y={811} x1={685} x2={2453} color="#fbc02d" dash="3 6" w={3} />
        <circle cx={2126.5} cy={246} r={4} fill="#2e7d32" />
        <g fontSize={10} textAnchor="middle">
          <text x={1014} y={1109} fill="#96253a">1230</text>
          <text x={1940} y={702} fill="#9c2833">1230</text>
          <text x={1174} y={1343} fill="#00bcd4">1530</text>
          <text x={2096} y={1078} fill="#00bcd4">1530</text>
          <text x={1201} y={1266} fill="#b08447">op</text>
          <text x={2127} y={892} fill="#b08447">op</text>
        </g>
        <Bolt x={2271} y={1358} />
        <HLine y={539} x1={683} x2={2432} color={CROSSHAIR} dash="6 5" />
        <VLine x={1532} y1={82} y2={1371} color={CROSSHAIR} dash="6 5" />

        <rect x={2408} y={90} width={35} height={19} fill="#2d6a30" />
        <rect x={2355} y={90} width={52} height={19} fill="#1a1b1e" />
        <g fontSize={10} fontWeight={600} fill="#fff" textAnchor="middle">
          <text x={2381} y={103}>Daily Gap</text>
          <text x={2426} y={103}>2.78%</text>
        </g>

        <AxisLabels x={2462} from={6420} step={20} count={33} top={95.5} pitch={38.95} skip={[6300, 6280, 6060, 5800]} />
        <rect x={2454} y={810} width={43} height={16} fill="#4caf50" />
        <PriceTags
          axis={2453}
          tags={[
            { y: 367, text: '6,280', fill: '#2962ff', name: 'VWAP', nameW: 38 },
            { y: 540, text: '6,192', fill: '#363a45', h: 21 },
            { y: 797, text: '6,060', fill: '#00bcd4', color: '#131722', name: 'week :HH', nameW: 60 },
            { y: 812, text: '6,052', fill: '#fbc02d', color: '#131722' },
            { y: 924, text: '5,994', fill: '#787b86' },
            { y: 942, text: '5,985', fill: '#e91e63' },
            { y: 990, text: '5,960', fill: '#4caf50' },
            { y: 1037, text: '5,936', fill: '#4caf50' },
            { y: 1058, text: '5,925', fill: '#787b86' },
            { y: 1095, text: '5,906', fill: '#e91e63' },
            { y: 1200, text: '5,852', fill: '#787b86' },
            { y: 1241, text: '5,831', fill: '#ffffff', color: '#131722', name: 'week :w_op', nameW: 73 },
            { y: 1298, text: '5,802', fill: '#e91e63' },
            { y: 1369, text: '10K', fill: '#90bff9', color: '#131722', w: 35, name: 'Volume', nameW: 50 },
            { y: 1354, text: '66.27K', fill: '#ffeb3b', color: '#131722', w: 52, name: 'Volume MA', nameW: 70 }
          ]}
        />
        <rect x={2419} y={311} width={34} height={17} rx={1} fill="#ffeb3b" />
        <rect x={2454} y={311} width={50} height={45} rx={1} fill="#ffeb3b" />
        <g fontSize={12} fill="#131722">
          <text x={2423} y={324}>8591</text>
          <text x={2462} y={323}>6,305</text>
          <text x={2462} y={337}>+7.15%</text>
          <text x={2462} y={351} fillOpacity={0.7}>01:20</text>
        </g>
        <rect x={2432} y={529} width={21} height={21} rx={1} fill="#363a45" />
        <path d="M2442.500 535.500v8M2438.500 539.500h8" stroke="#fff" />
        <circle cx={2442.5} cy={539.5} r={8} fill="none" stroke="#fff" />
        <rect x={683} y={1371} width={1826} height={30} fill="#000" />
        <VLine x={2453} y1={82} y2={1397} color="#8c8c8c" />
        <HLine y={1371} x1={683} x2={2509} color="#8c8c8c" />
        <TimeLabels
          y={1389}
          labels={[[744, '12:30'], [816, '13:00'], [882, '13:30'], [948, '14:00'], [1014, '14:30'], [1097, '15:00'], [1201, '20'], [1334, '09:30'], [1417, '10:00'], [1662, '12:30'], [1740, '13:00'], [1812, '13:30'], [1872, '14:00'], [1940, '14:30'], [2009, '15:00'], [2126, '21'], [2281, '09:30'], [2359, '10:00'], [2437, '10:30']]}
        />
        <rect x={1475} y={1372} width={115} height={23} rx={1} fill="#363a45" />
        <g fontSize={12} fontWeight={600} fill="#fff">
          <text x={1484} y={1390}>5月 20 (水)</text>
          <text x={1551} y={1390}>10:48</text>
        </g>
        <g fill="none" stroke="#dbdbdb">
          <path d="M2478.500 1379.500h8l4 6-4 6h-8l-4-6z" />
          <circle cx={2482.5} cy={1385.5} r={2.5} />
        </g>
      </g>
    </svg>
  );
}

function ring(x: number, y: number, r = 2): string {
  return `M${x - r} ${y}a${r} ${r} 0 1 0 ${r * 2} 0a${r} ${r} 0 1 0 ${-r * 2} 0`;
}

const ICON_PATHS: Record<string, string> = {
  cross: 'M14 3v8M14 17v8M3 14h8M17 14h8',
  trend: `M7 20.500L21 6.500${ring(22.5, 5)}${ring(5.5, 22)}M17.500 17h6a2 2 0 0 1 2 2v4a2 2 0 0 1-2 2h-6a2 2 0 0 1-2-2v-4a2 2 0 0 1 2-2z`,
  fib: `M3 4.500h22M3 10.500h19M3 16.500h22M7 22.500h18${ring(24, 10.5)}${ring(4.5, 22.5)}`,
  pattern: `M5.800 21L8 7M7 21.500L12 14M15 11.500L18.500 7.500M9.500 6.500L22 19.500M20.500 8L23 19${ring(8, 5)}${ring(20, 6)}${ring(13.5, 12.5)}${ring(5.5, 23)}${ring(23.5, 21)}`,
  forecast: `M7.500 5.500H25M3 18.500h22M7.500 23.500H25M13 9v6h3${ring(5.5, 5.5)}${ring(5.5, 23.5)}`,
  rect: `M7.500 5.500h13M7.500 22.500h13M5.500 7.500v13M22.500 7.500v13${ring(5.5, 5.5)}${ring(22.5, 5.5)}${ring(5.5, 22.5)}${ring(22.5, 22.5)}`,
  price: `M4.500 2.500h18v14h-18zM14 16.500v5${ring(14, 23.5)}M17 7c-1-1.500-6-1.500-6 .7s6 1.300 6 3.600-5 2.200-6 .4M14 4.500v10`,
  magnet: 'M6.500 24.500V12a7.500 7.500 0 0 1 15 0v12.500h-5V12a2.500 2.500 0 0 0-5 0v12.500zM6.500 20.500h5M16.500 20.500h5',
  pencilLock: 'M4 16L14 4l4 4L8 19l-5 1zM16 18.500h9v7h-9zM18 18.500v-2a2.500 2.500 0 0 1 5 0M20.500 21.500v1.500',
  lock: 'M6.500 12.500h16v11h-16zM10 12.500V7a4 4 0 0 1 8-1v1M14.500 16.500v3',
  eye: `M3.500 14c3-5 6.500-8 10.500-8s7.500 3 10.500 8c-3 5-6.500 8-10.500 8s-7.500-3-10.500-8z${ring(14, 14, 3.5)}`,
  hline: `M8 14h18${ring(5.5, 14)}`,
  ray: `M7 21L12.500 15.500M15.500 12.500L23 4${ring(5.5, 22.5)}${ring(14, 14)}`,
  channel: `M5 17L16 5M14 23L26 12${ring(4, 18.5)}${ring(17.5, 4)}${ring(13, 24)}${ring(20, 17.5)}`,
  arrowUp: 'M14 4.500L4.500 15h5v9h9v-9h5z',
  arrowDown: 'M14 23.500L4.500 14h5V4.500h9V14h5z',
  grid: `M4.500 4.500h17M4.500 11h21M4.500 17h21M4.500 23.500h21M4.500 4.500v17M11 4.500v19M18 4.500v19M25 7v16.500${ring(24.5, 4)}${ring(4, 24)}`,
  dateRange: `M4.500 3v17M24.500 8v17M5 14.500h17M18 11l4 3.500-4 3.500${ring(4.5, 22.5)}${ring(24.5, 5.5)}`,
  priceRange: `M4 4.500h16M8 24.500h17M14.500 24V8M11 11l3.500-4 3.500 4${ring(22.5, 4.5)}${ring(5.5, 24.5)}`,
  path: `M3 20l7-7M12 13l5 6M19 18l7-8M21 9.500h5v5${ring(11, 12)}${ring(18, 19.5)}`,
  elliott: `M3 21l5-7M11 14l4 6M18 20l5-7M9 2v5M8 3l1-1M22 2h2M22 2v2h2v3h-2${ring(9.5, 12.5)}${ring(3, 23)}${ring(16.5, 22)}${ring(24, 12)}`,
  pin: `M14 25c-5-6-8-10-8-14a8 8 0 0 1 16 0c0 4-3 8-8 14z${ring(14, 11, 3.5)}`,
  shortPos: `M7.500 5.500H25M3 10.500h22M7.500 23.500H25M16 14c-1-1-4-.5-3 1s3 1 3 2.500-3 1.500-3.500.3${ring(5.5, 5.5)}${ring(5.5, 23.5)}`,
  text: 'M6.500 7V4.500h15V7M14 4.500v19M11 23.500h6',
  goTo: 'M7.500 11V7a2 2 0 0 1 2-2h13a2 2 0 0 1 2 2v15a2 2 0 0 1-2 2h-7M7.500 10.500h17M12 2.500v5M20 2.500v5M5 19.500h8M10 16l3.500 3.500L10 23',
  candles: 'M9.500 4v4M9.500 20v4M6.500 8.500h6v11h-6zM18.500 7v3M18.500 18v3M15.500 10.500h6v7h-6z',
  hollow: 'M8.500 4v5M8.500 19v5M5.500 9.500h6v9h-6zM20 4v3M20 21v3M15.500 7.500h8v13h-8z',
  indicator: 'M5 14l6-7 5 4 8-8M5 24.500v-5h4v5zM12 24.500v-8h4v8zM19 24.500V13h4v11.500zM20 3h4v4',
  templates: 'M5.500 5.500h6v6h-6zM16.500 5.500h6v6h-6zM5.500 16.500h6v6h-6zM16.500 16.500h6v6h-6z',
  alarm: 'M21.500 10.500a8.500 8.500 0 1 0-7 13M13 9v6h-4M4 7l4-4M18 3l4 4M20.500 15v9M16 19.500h9',
  rewind: 'M13 7v14L5.500 14zM22.500 7v14L15 14z',
  undo: 'M10.500 7.500L6 12l4.500 4.500M6 12h9.500a6 6 0 0 1 6 6v2.500',
  redo: 'M17.500 7.500L22 12l-4.500 4.500M22 12h-9.500a6 6 0 0 0-6 6v2.500',
  layout: 'M4.500 4.500h19v19h-19zM14 4.500v19M4.500 14H14',
  quick: 'M12.500 4.500a8.500 8.500 0 1 0 9 9M19.500 19.500l5 5M16 3l-5 9h4l-2 6 7-9h-4z',
  hex: `M8.500 4.500h11l5.500 9.500-5.500 9.500h-11L3 14z${ring(14, 14, 4)}`,
  full: 'M5 11V7a2 2 0 0 1 2-2h4M17 5h4a2 2 0 0 1 2 2v4M23 17v4a2 2 0 0 1-2 2h-4M11 23H7a2 2 0 0 1-2-2v-4',
  camera: `M4.500 8.500h5l2-3h5l2 3h5v15h-19z${ring(14, 15.5, 4.5)}`,
  diamond: 'M8 5h12l5 7-11 12L3 12zM14 11l2.500 2.500L14 17l-2.500-3.500zM14 17v7',
  list: 'M6.500 3.500h15v21L14 19.500l-7.500 5zM10 8.500h8M10 12.500h8M10 16.500h8',
  clock: `${ring(14, 14, 10)}M14 8v7h5`,
  layers: 'M14 4l11 6-11 6-11-6zM3 14.500l11 6 11-6M3 18.500l11 6 11-6',
  chat: 'M4.500 3.500h16a2 2 0 0 1 2 2v9a2 2 0 0 1-2 2h-12l-4 4v-15M23 10.500h3v14l-4-3.500h-7l-2.500-3',
  radar: `${ring(14, 14, 12)}${ring(14, 14, 7)}${ring(14, 14, 1)}M14 14l8.500-8.500`,
  peaks: 'M14 3.500L8 13l3-1 4 4 5-3zM7 14.500L3.500 24.500h21L21 15',
  calendar: 'M4.500 7.500a2 2 0 0 1 2-2h15a2 2 0 0 1 2 2v15a2 2 0 0 1-2 2h-15a2 2 0 0 1-2-2zM4.500 11.500h19M9.500 3v5M18.500 3v5',
  stream: `${ring(6, 22, 1.5)}M5 15.500c4 0 7.500 3.500 7.500 8M5 9.500c7 0 13.500 6 13.500 14M5 4c10 0 19 8 19 19.500`,
  bell: 'M4.500 21.500v-2c2-1 2.500-3 2.500-7a7 7 0 0 1 14 0c0 4 .5 6 2.500 7v2zM11 22a3 3 0 0 0 6 0',
  help: `${ring(14, 14, 12)}M10 11a4 4 0 1 1 5 4c-1 .5-1 1-1 3M14 20.500v1.500`,
  monitor: 'M3.500 4.500h21v12h-21zM14 4.500v19M9 23.500h10',
  dots: `${ring(6, 14)}${ring(14, 14)}${ring(22, 14)}`,
  minimize: 'M8 15h12',
  restore: 'M8.500 11.500h8v9h-8zM11.500 11V7.500h8v10H17',
  exit: 'M16 5.500H6.500v17H16M19 10v-4.500M11 14h14M21 10l4 4-4 4',
  expand: 'M16.500 6.500h6v6M5.500 15.500v6h6'
};

function Icon({ name, className = 'size-7' }: { name: string; className?: string }) {
  return (
    <svg viewBox="0 0 28 28" className={`shrink-0 ${className}`} fill="none" stroke="currentColor" strokeWidth={1.1} aria-hidden="true">
      <path d={ICON_PATHS[name]} />
    </svg>
  );
}

function IconButton({ label, children, className = '' }: { label: string; children: ReactNode; className?: string }) {
  return (
    <button type="button" aria-label={label} className={`flex shrink-0 items-center justify-center ${className}`}>
      {children}
    </button>
  );
}

function OrixLogo() {
  return (
    <svg viewBox="0 0 18 18" className="size-[18px] shrink-0" aria-hidden="true">
      <circle cx="9" cy="9" r="9" fill="#d5004a" />
      <path d="M4 12l1-5 2 4 1-6 1.500 5 1.500-5.500 1 5L14 5M5 13l8-2.500" stroke="#f8a0bd" fill="none" />
    </svg>
  );
}

interface TabInfo {
  name: string;
  change?: string;
  up?: boolean;
  logo: ReactNode;
  line?: string;
  active?: boolean;
  close?: boolean;
}

function Disc({ fill, children }: { fill: string; children?: ReactNode }) {
  return (
    <svg viewBox="0 0 18 18" className="size-[18px] shrink-0" aria-hidden="true">
      <circle cx="9" cy="9" r="9" fill={fill} />
      {children}
    </svg>
  );
}

function Letter({ children, fill, size = 10 }: { children: string; fill: string; size?: number }) {
  return <text x="9" y={9 + size * 0.36} textAnchor="middle" fontSize={size} fontWeight="800" fill={fill}>{children}</text>;
}

const bulb = (
  <Disc fill="#dbdbdb">
    <path d="M7.500 14h3M7.500 12.500c0-2-2.500-2.500-2.500-5a4 4 0 0 1 8 0c0 2.500-2.500 3-2.500 5zM9 12V8" stroke="#3d3d3d" fill="none" strokeWidth="1.200" />
  </Disc>
);

const TABS: TabInfo[] = [
  { name: '6857', change: '+3.12', up: true, logo: <Disc fill="#f3f4fa"><path d="M4 13l5-9h4v9h-2.500V7L7 13z" fill="#96145a" /></Disc> },
  { name: '9984', change: '+14.1', up: true, line: 'bg-[#4caf50]', logo: <Disc fill="#16191d"><path d="M5 7h8M5 11h8" stroke="#fff" strokeWidth="2" /></Disc> },
  { name: '6963', change: '+4.85', up: true, logo: <Disc fill="#d7000f"><Letter fill="#fff" size={5}>ROHM</Letter></Disc> },
  { name: '5803', change: '+2.17', up: true, line: 'bg-[#fdd835]', logo: <Disc fill="#f3f4fa"><path d="M7 5h7l-1 2.500H9L8 14H5z" fill="#0a3c8c" /><path d="M6 5h8l-1 2.500H6z" fill="#00a0e9" /></Disc> },
  { name: '7974', change: '−2.51', up: false, line: 'bg-[#fb8c00]', logo: <Disc fill="#e60012"><circle cx="9" cy="9" r="5.500" fill="none" stroke="#fff" /><Letter fill="#fff" size={8}>N</Letter></Disc> },
  { name: '7203', change: '+2.01', up: true, logo: <Disc fill="#eb0a1e"><g fill="none" stroke="#fff"><ellipse cx="9" cy="9" rx="5.500" ry="4" /><ellipse cx="9" cy="9" rx="2" ry="4" /><ellipse cx="9" cy="7.500" rx="4" ry="1.500" /></g></Disc> },
  { name: '285A', change: '+0.', up: true, close: true, logo: <Disc fill="#f3f4fa"><Letter fill="#111">K</Letter></Disc> },
  { name: '8766', change: '+1.', up: true, close: true, logo: <Disc fill="#f3f4fa"><path d="M5 12c1-5 3-8 5-8M7 14c1-5 3-7 5-8M10 14c1-3 2-4 3-5" stroke="#0082a0" strokeWidth="1.500" fill="none" /></Disc> },
  { name: '1321', change: '+2.', up: true, close: true, logo: <Disc fill="#f3f4fa"><path d="M5.500 6v6M12.500 6v6" stroke="#00917c" strokeWidth="2" /><path d="M8 6v4l2 2V8z" fill="#77cccc" /></Disc> },
  { name: '8306', change: '+3.', up: true, close: true, logo: <Disc fill="#f3f4fa"><circle cx="9" cy="9" r="5.500" fill="none" stroke="#e60012" strokeWidth="1.500" /><circle cx="9" cy="9" r="2.500" fill="none" stroke="#e60012" strokeWidth="2" /></Disc> },
  { name: '3103', change: '−1.', up: false, close: true, logo: <Disc fill="#f3f4fa"><path d="M6 5v4a3 3 0 0 0 6 0V5" stroke="#0090d8" strokeWidth="2.800" fill="none" /></Disc> },
  { name: '8591', change: '+4.', up: true, close: true, active: true, logo: <OrixLogo /> },
  { name: '4661', change: '−3.', up: false, close: true, logo: <Disc fill="#f3f4fa"><path d="M4 9a5 5 0 0 1 8-3.500" stroke="#16294d" strokeWidth="2" fill="none" /><circle cx="10" cy="9" r="3" fill="#2a9d5a" /><path d="M6 13a5 5 0 0 0 7-2" stroke="#dd3333" strokeWidth="2" fill="none" /></Disc> },
  { name: '6981', change: '+8.', up: true, close: true, logo: <Disc fill="#e6193c"><Letter fill="#fff" size={13}>m</Letter></Disc> },
  { name: '6098', change: '+0.', up: true, close: true, logo: <Disc fill="#1272b8"><path d="M7 14c0-5 0-9 4-9 3 0 3 3 1 4" stroke="#fff" strokeWidth="2" fill="none" /></Disc> },
  { name: 'SR 15s LONG', close: true, logo: bulb },
  { name: '8766 N DOW', close: true, logo: bulb }
];

function Tab({ tab }: { tab: TabInfo }) {
  return (
    <button
      type="button"
      className={`relative flex h-full w-[131px] shrink-0 items-center pl-3 text-[13px] font-semibold text-[#dbdbdb] ${tab.active ? 'rounded-t-lg bg-[#0f0f0f]' : ''}`}
    >
      {tab.logo}
      <span className="flex min-w-0 flex-1 items-center gap-1 overflow-hidden whitespace-nowrap pl-1 [mask-image:linear-gradient(to_right,black_55%,transparent_105%)]">
        <span>{tab.name}</span>
        {tab.change && (
          <>
            <svg viewBox="0 0 12 10" className="h-2.5 w-3 shrink-0" aria-hidden="true">
              <path d={tab.up ? 'M6 0l5.500 10H.5z' : 'M6 10L.5 0h11z'} fill={tab.up ? UP : DOWN} />
            </svg>
            <span className={`font-medium ${tab.up ? 'text-[#089981]' : 'text-[#f23645]'}`}>{tab.change}</span>
          </>
        )}
      </span>
      {tab.close ? <X className="mr-1.5 size-4 shrink-0" strokeWidth={1.5} /> : <span className="w-2.5 shrink-0" />}
      {!tab.active && <span className="h-5 w-px shrink-0 bg-[#5a5a5a]" />}
      {tab.line && <span className={`absolute bottom-0 left-3 right-3 h-[3px] ${tab.line}`} />}
    </button>
  );
}

function TabBar() {
  return (
    <header className="flex h-[35px] shrink-0 items-center bg-[#3d3d3d] text-[#dbdbdb]">
      {TABS.map((tab) => <Tab key={tab.name + tab.change} tab={tab} />)}
      <IconButton label="新しいタブ" className="w-7 text-[#8c8c8c]"><Plus className="size-[18px]" strokeWidth={1.25} /></IconButton>
      <div className="ml-auto flex items-center">
        <IconButton label="モニター" className="mr-3 text-[#8c8c8c]"><Icon name="monitor" className="size-[26px]" /></IconButton>
        <span className="h-5 w-px bg-[#5a5a5a]" />
        <IconButton label="メニュー" className="w-[50px] text-[#8c8c8c]"><Icon name="dots" className="size-6" /></IconButton>
        <IconButton label="最小化" className="w-[50px]"><Icon name="minimize" className="size-6" /></IconButton>
        <IconButton label="元に戻す" className="w-[50px]"><Icon name="restore" className="size-6" /></IconButton>
        <IconButton label="終了" className="w-[50px]"><Icon name="exit" className="size-6" /></IconButton>
      </div>
    </header>
  );
}

function Divider() {
  return <span className="h-[22px] w-px shrink-0 bg-[#4a4a4a]" />;
}

const INTERVALS = ['15秒', '2分', '10分', '30分', '1時間', '4時間', '日', '週', '月', '3分'];
const TEMPLATES = ['0', '2', '4', 'D', 'M', 'W', 'F', 'P', 'O', 'C', '個', 'V', 'Z'];

function Toolbar() {
  return (
    <div className="flex h-[41px] shrink-0 items-center bg-[#0f0f0f] pt-0.5 text-sm text-[#dbdbdb]">
      <button type="button" aria-label="アカウント" className="relative ml-3 size-7 shrink-0 rounded-full bg-black">
        <svg viewBox="0 0 28 28" className="size-7" aria-hidden="true">
          <circle cx="14" cy="14" r="13.500" fill="#050505" stroke="#222" />
          <path d="M12 25l1-8 2-9 1-4" stroke="#c4532d" fill="none" />
          <path d="M3 19l4-2 3 3M18 17l4 2 3-3" stroke="#555" fill="none" />
        </svg>
        <span className="absolute -right-2.5 -top-1 flex size-[18px] items-center justify-center rounded-full bg-[#f23645] text-[10px] font-semibold text-white">11</span>
      </button>
      <button type="button" className="ml-4 flex h-7 w-32 shrink-0 items-center justify-between rounded-full bg-[#3d3d3d] pl-3 pr-0.5 font-bold">
        8591
        <span className="flex size-6 items-center justify-center rounded-full bg-[#0f0f0f]"><Icon name="diamond" className="size-5" /></span>
      </button>
      <IconButton label="比較" className="ml-3 size-5 rounded-full border border-[#dbdbdb]"><Plus className="size-3.5" strokeWidth={1.25} /></IconButton>
      <span className="w-3.5" />
      <Divider />
      <div className="ml-[5px] flex items-center gap-px">
        {INTERVALS.map((label) => (
          <button key={label} type="button" className={`h-[34px] shrink-0 rounded-md px-[5px] ${label === '2分' ? 'bg-[#3d3d3d]' : ''}`}>{label}</button>
        ))}
      </div>
      <ChevronDown className="ml-2 size-3.5" strokeWidth={1.5} />
      <span className="w-2.5" />
      <Divider />
      <IconButton label="ローソク足" className="ml-1.5 size-[34px]"><Icon name="candles" className="size-7" /></IconButton>
      <IconButton label="ボリュームローソク足" className="ml-1 size-[34px] rounded-md bg-[#3d3d3d]"><Icon name="hollow" className="size-7" /></IconButton>
      <ChevronDown className="ml-2 size-3.5" strokeWidth={1.5} />
      <span className="w-2.5" />
      <Divider />
      <button type="button" className="ml-2.5 flex shrink-0 items-center gap-1 whitespace-nowrap"><Icon name="indicator" className="size-6" />インジケーター</button>
      <ChevronDown className="ml-3.5 size-3.5" strokeWidth={1.5} />
      <IconButton label="テンプレート" className="ml-3"><Icon name="templates" className="size-6" /></IconButton>
      <div className="ml-2.5 flex gap-[7px]">
        {TEMPLATES.map((label) => (
          <button key={label} type="button" className="flex size-[21px] items-center justify-center rounded-full border border-[#4a4a4a] text-[10px] font-semibold leading-none">{label}</button>
        ))}
      </div>
      <span className="w-3.5" />
      <Divider />
      <button type="button" className="ml-3 flex items-center gap-1.5 whitespace-nowrap"><Icon name="alarm" className="size-6" />アラート</button>
      <button type="button" className="ml-4 flex items-center gap-1.5 whitespace-nowrap"><Icon name="rewind" className="size-6" />リプレイ</button>
      <ChevronDown className="ml-3.5 size-3.5" strokeWidth={1.5} />
      <span className="w-2" />
      <Divider />
      <IconButton label="元に戻す" className="ml-3"><Icon name="undo" className="size-6" /></IconButton>
      <IconButton label="やり直す" className="ml-4 text-[#6a6a6a]"><Icon name="redo" className="size-6" /></IconButton>

      <div className="ml-auto flex items-center pr-1.5">
        <IconButton label="レイアウト"><Icon name="layout" className="size-7" /></IconButton>
        <button type="button" className="ml-2.5 flex flex-col items-center text-[13px] leading-[13px]">
          JP stocks
          <span className="text-[11px] leading-3 text-[#2962ff]">保存</span>
        </button>
        <ChevronDown className="ml-2.5 size-3.5" strokeWidth={1.5} />
        <button type="button" className="ml-2 flex size-[22px] items-center justify-center rounded-full bg-[#f0f0f0] text-[10px] font-semibold text-[#0f0f0f]">J</button>
        <span className="w-3.5" />
        <Divider />
        <div className="mx-2.5 flex gap-[14px]">
          <IconButton label="クイック検索"><Icon name="quick" className="size-6" /></IconButton>
          <IconButton label="設定"><Icon name="hex" className="size-6" /></IconButton>
          <IconButton label="全画面"><Icon name="full" className="size-6" /></IconButton>
          <IconButton label="スナップショット"><Icon name="camera" className="size-6" /></IconButton>
        </div>
        <button type="button" className="ml-1 h-7 rounded-full border border-[#4a4a4a] px-[11px]">トレード</button>
        <button type="button" className="ml-2 h-7 rounded-full bg-[#f0f0f0] px-[11px] font-medium text-[#0f0f0f]">投稿</button>
      </div>
    </div>
  );
}

const RAIL_TOP = ['cross', 'trend', 'fib', 'pattern', 'forecast', 'rect', 'price'];

function RailButton({ label, children, tone = '' }: { label: string; children: ReactNode; tone?: string }) {
  return <IconButton label={label} className={`mb-1 size-[34px] rounded-lg ${tone}`}>{children}</IconButton>;
}

function RailDivider() {
  return <span className="mb-2 mt-[3px] h-px w-9 bg-[#4a4a4a]" />;
}

function LeftRail() {
  return (
    <nav className="flex w-[52px] shrink-0 flex-col items-center bg-[#0f0f0f] pt-2 text-[#dbdbdb]">
      {RAIL_TOP.map((name) => (
        <RailButton key={name} label={name} tone={name === 'cross' ? 'bg-[#3d3d3d]' : ''}><Icon name={name} /></RailButton>
      ))}
      <RailButton label="お気に入り"><Heart className="size-[26px]" strokeWidth={1} /></RailButton>
      <RailDivider />
      <RailButton label="計測"><Ruler className="size-[25px] -scale-x-100" strokeWidth={1} /></RailButton>
      <RailButton label="ズーム"><ZoomIn className="size-[22px]" strokeWidth={1} /></RailButton>
      <RailDivider />
      <RailButton label="マグネット"><Icon name="magnet" className="size-6" /></RailButton>
      <RailButton label="描画モード維持"><Icon name="pencilLock" className="size-6" /></RailButton>
      <RailButton label="ロック"><Icon name="lock" className="size-6" /></RailButton>
      <RailButton label="表示"><Icon name="eye" className="size-6" /></RailButton>
      <RailButton label="同期" tone="bg-[#f0f0f0] text-[#0f0f0f]"><Link2 className="size-[22px] -rotate-45" strokeWidth={1.25} /></RailButton>
      <RailDivider />
      <RailButton label="削除"><Trash className="size-[22px]" strokeWidth={1} /></RailButton>
      <IconButton label="お気に入りツールバー" className="mb-[22px] mt-auto size-[34px] rounded-lg bg-[#f0f0f0] text-[#0f0f0f]"><Star className="size-[22px]" strokeWidth={1.25} /></IconButton>
    </nav>
  );
}

function RightRail() {
  return (
    <nav className="flex w-[45px] shrink-0 flex-col items-center bg-[#0f0f0f] pb-2.5 pt-2.5 text-[#dbdbdb]">
      <div className="flex flex-col gap-[18px]">
        <IconButton label="ウォッチリスト"><Icon name="list" /></IconButton>
        <div className="relative">
          <IconButton label="アラート"><Icon name="clock" /></IconButton>
          <span className="absolute -right-2 -top-2 rounded-full bg-[#f23645] px-1 text-[10px] font-semibold leading-4 text-white">99+</span>
        </div>
        <IconButton label="オブジェクトツリー"><Icon name="layers" /></IconButton>
        <IconButton label="チャット"><Icon name="chat" /></IconButton>
      </div>
      <div className="mt-auto flex flex-col items-center gap-4">
        {['radar', 'peaks', 'calendar', 'stream', 'bell'].map((name) => (
          <IconButton key={name} label={name}><Icon name={name} /></IconButton>
        ))}
        <IconButton label="アプリ" className="mb-0.5 mt-0.5 size-[34px] rounded-full bg-[#f0f0f0]">
          <svg viewBox="0 0 18 18" className="size-[18px]" fill="#0f0f0f" aria-hidden="true">
            {[0, 7, 14].map((y) => [0, 7, 14].map((x) => <rect key={`${x}-${y}`} x={x} y={y} width="4" height="4" rx="1" />))}
          </svg>
        </IconButton>
        <span className="-my-1 h-px w-8 bg-[#4a4a4a]" />
        <IconButton label="ヘルプ"><Icon name="help" /></IconButton>
      </div>
    </nav>
  );
}

function MarketDot() {
  return (
    <span className="ml-2 flex size-[17px] items-center justify-center rounded-full bg-[#06281f]">
      <span className="size-2 rounded-full bg-[#3bbfa4]" />
    </span>
  );
}

function Volume({ value }: { value: string }) {
  return (
    <span className="whitespace-nowrap text-[13px] text-[#dbdbdb]">
      出来高<span className="text-[#089981]">{value}</span>
    </span>
  );
}

interface LegendProps {
  interval: string;
  volume: string;
  count: string;
  stacked?: boolean;
  inset?: string;
}

function Legend({ interval, volume, count, stacked, inset = 'left-2 top-1.5' }: LegendProps) {
  return (
    <div className={`absolute flex flex-col items-start text-[#dbdbdb] ${inset}`}>
      <div className="flex h-[22px] items-center">
        <OrixLogo />
        <h2 className="ml-1 whitespace-nowrap text-base">オリックス · {interval} · TSE</h2>
        <MarketDot />
        {!stacked && <span className="ml-2 flex"><Volume value={volume} /></span>}
      </div>
      {stacked && <div className="flex h-6 items-center"><Volume value={volume} /></div>}
      <div className={`flex items-center gap-4 ${stacked ? 'mt-[3px]' : 'mt-[5px]'}`}>
        <button type="button" className="flex h-[21px] w-8 items-center justify-center gap-1 rounded border border-[#3d3d3d] text-xs">
          <ChevronDown className="size-3" strokeWidth={2} />
          {count}
        </button>
        <span className="flex size-[18px] items-center justify-center rounded-full bg-[#261a3f] text-[#9575ff]">
          <RefreshCw className="size-3.5" strokeWidth={2} />
        </span>
      </div>
    </div>
  );
}

const RANGES = ['1日', '5日', '1ヶ月', '3ヶ月', '6ヶ月', '年初来', '1年', '5年', 'すべて'];
const DRAWING_TOOLS = ['hline', 'ray', 'trend', 'channel', 'arrowUp', 'price', 'rect', 'grid', 'arrowDown', 'dateRange', 'forecast', 'priceRange', 'path', 'elliott', 'fib', 'pin', 'shortPos', 'text'];

function BottomBar() {
  return (
    <footer className="flex h-[37px] shrink-0 items-center bg-[#0f0f0f] text-sm text-[#dbdbdb]">
      <div className="flex w-[453px] shrink-0 items-center pl-[9px]">
        <div className="flex gap-0.5">
          {RANGES.map((label) => (
            <button key={label} type="button" className="whitespace-nowrap px-[5px]">{label}</button>
          ))}
        </div>
        <span className="ml-1" />
        <Divider />
        <IconButton label="日付に移動" className="ml-3"><Icon name="goTo" className="size-6" /></IconButton>
      </div>
      <div className="flex h-full items-center gap-2.5 rounded-lg bg-[#1f1f1f] pl-2 pr-1">
        <svg viewBox="0 0 8 14" className="h-3.5 w-2 shrink-0" fill="#5a5a5a" aria-hidden="true">
          {[0, 4, 8, 12].map((y) => [0, 5].map((x) => <rect key={`${x}-${y}`} x={x} y={y} width="2" height="2" />))}
        </svg>
        {DRAWING_TOOLS.map((name) => (
          <IconButton key={name} label={name}><Icon name={name} /></IconButton>
        ))}
      </div>
      <div className="ml-auto flex items-center pr-2">
        <button type="button">09:26:40 UTC+9</button>
        <span className="w-2.5" />
        <Divider />
        <button type="button" className="ml-2.5">配当調整</button>
        <IconButton label="最大化" className="ml-3"><Icon name="expand" /></IconButton>
      </div>
    </footer>
  );
}

export default function App() {
  return (
    <div className="flex h-screen flex-col overflow-hidden bg-[#2e2e2e] font-['Open_Sans','Noto_Sans_CJK_JP',sans-serif]">
      <TabBar />
      <Toolbar />
      <div className="flex min-h-0 flex-1 pb-0.5 pt-1">
        <LeftRail />
        <main className="ml-1 mr-[5px] flex min-w-0 flex-1 flex-col gap-0.5">
          <div className="flex min-h-0 flex-1 gap-0.5">
            <div className="grid w-[623px] shrink-0 grid-rows-[672fr_645fr] gap-0.5">
              <section className="relative min-h-0 overflow-hidden rounded bg-black">
                <DailyChart />
                <Legend interval="1日" volume="5.38M" count="4" stacked />
              </section>
              <section className="relative min-h-0 overflow-hidden rounded bg-black">
                <SecondsChart />
                <Legend interval="15秒" volume="1.24M" count="6" />
              </section>
            </div>
            <section className="relative min-w-0 flex-1 overflow-hidden rounded border-2 border-[#8c8c8c] bg-black">
              <MainChart />
              <Legend interval="2" volume="23.5K" count="9" inset="left-1.5 top-1" />
            </section>
          </div>
          <BottomBar />
        </main>
        <RightRail />
      </div>
    </div>
  );
}
